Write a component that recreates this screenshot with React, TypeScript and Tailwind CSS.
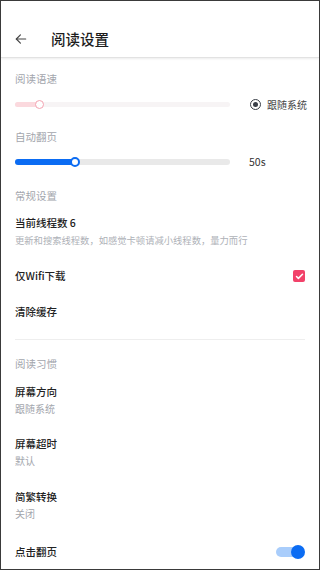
import React from "react";

const font = { fontFamily: '"Noto Sans CJK SC", "Noto Sans", sans-serif' };

function Label({ children, className = "" }: { children: React.ReactNode; className?: string }) {
  return <div className={`text-[10.5px] leading-[16px] text-[#a3a6ad] ${className}`}>{children}</div>;
}

function Title({ children, className = "" }: { children: React.ReactNode; className?: string }) {
  return <div className={`text-[10.5px] leading-[18px] font-medium text-[#222] ${className}`}>{children}</div>;
}

function Sub({ children, className = "" }: { children: React.ReactNode; className?: string }) {
  return <div className={`text-[10px] leading-[16px] text-[#a3a6ad] ${className}`}>{children}</div>;
}

export default function App() {
  return (
    <div style={font} className="w-[320px] h-[570px] overflow-hidden bg-white border border-[#3a3a3a] flex flex-col">
      <div className="h-[57px] pt-[28px] flex items-start border-b border-[#e2e2e2] shadow-[0_1px_2px_rgba(0,0,0,0.08)]">
        <div className="w-[50px] h-[20px] flex items-center pl-[13px]">
          <svg width="14" height="14" viewBox="0 0 24 24" fill="none" stroke="#444" strokeWidth="2" strokeLinecap="round" strokeLinejoin="round">
            <path d="M20 12H4" />
            <path d="M11 5l-7 7 7 7" />
          </svg>
        </div>
        <div className="text-[14.5px] leading-[20px] font-medium text-[#1d1d1d]">阅读设置</div>
      </div>

      <div className="px-[14px] flex flex-col">
        <Label className="mt-[13px]">阅读语速</Label>
        <div className="mt-[9px] h-[16px] flex items-center">
          <div className="relative shrink-0 w-[215px] h-[5px] rounded-full bg-[#f7f4f5]">
            <div className="absolute left-0 top-0 h-[5px] w-[24px] rounded-full bg-[#fbd9de]" />
            <div className="absolute left-[20px] top-[-2px] w-[9px] h-[9px] rounded-full bg-white border-[1.5px] border-[#f4a3b1]" />
          </div>
          <div className="ml-[20px] flex items-center shrink-0 whitespace-nowrap">
            <div className="w-[11px] h-[11px] rounded-full border-[1.5px] border-[#3a3f48] flex items-center justify-center">
              <div className="w-[5px] h-[5px] rounded-full bg-[#3a3f48]" />
            </div>
            <span className="ml-[6px] text-[10px] text-[#444]">跟随系统</span>
          </div>
        </div>

        <Label className="mt-[17px]">自动翻页</Label>
        <div className="mt-[9px] h-[16px] flex items-center">
          <div className="relative shrink-0 w-[215px] h-[6px] rounded-full bg-[#e9e9e9]">
            <div className="absolute left-0 top-0 h-[6px] w-[60px] rounded-full bg-[#0b6cf3]" />
            <div className="absolute left-[55px] top-[-2px] w-[10px] h-[10px] rounded-full bg-white border-[2px] border-[#0b6cf3]" />
          </div>
          <span className="ml-[19px] text-[10.5px] text-[#333]">50s</span>
        </div>

        <Label className="mt-[18px]">常规设置</Label>
        <Title className="mt-[10px]">当前线程数 6</Title>
        <div className="mt-[1px] text-[9.3px] leading-[14px] text-[#aeb1b7] whitespace-nowrap">更新和搜索线程数，如感觉卡顿请减小线程数，量力而行</div>

        <div className="mt-[20px] flex items-center justify-between">
          <Title>仅Wifi下载</Title>
          <div className="w-[12px] h-[12px] rounded-[2px] bg-[#f2426a] flex items-center justify-center">
            <svg width="9" height="9" viewBox="0 0 24 24" fill="none" stroke="white" strokeWidth="4" strokeLinecap="round" strokeLinejoin="round">
              <path d="M4 12l5 5L20 6" />
            </svg>
          </div>
        </div>

        <Title className="mt-[18px]">清除缓存</Title>
        <div className="mt-[18px] h-px bg-[#eeeeee]" />

        <Label className="mt-[16px]">阅读习惯</Label>
        <Title className="mt-[11px]">屏幕方向</Title>
        <Sub>跟随系统</Sub>
        <Title className="mt-[18px]">屏幕超时</Title>
        <Sub>默认</Sub>
        <Title className="mt-[19px]">简繁转换</Title>
        <Sub>关闭</Sub>

        <div className="mt-[21px] flex items-center justify-between">
          <Title>点击翻页</Title>
          <div className="relative w-[29px] h-[16px] flex items-center">
            <div className="w-[26px] h-[10px] rounded-full bg-[#a9cdfb]" />
            <div className="absolute right-0 top-[1px] w-[14px] h-[14px] rounded-full bg-[#0b6cf3]" />
          </div>
        </div>
      </div>
    </div>
  );
}
